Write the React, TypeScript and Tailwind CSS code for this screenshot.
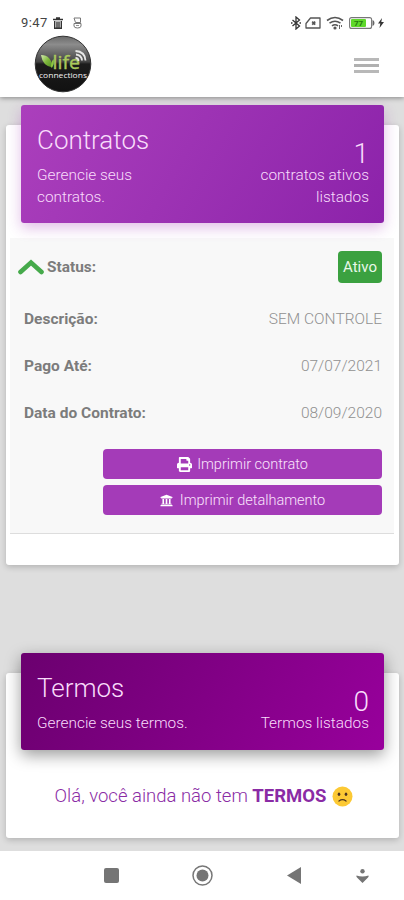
import React from 'react';
import { FaPrint, FaUniversity } from 'react-icons/fa';

interface PanelProps {
  title: string;
  subtitle: string;
  count: number;
  countLabel: string;
  className: string;
  bannerClassName: string;
  children: React.ReactNode;
}

interface FieldProps {
  label: string;
  value: string;
}

const StatusBar: React.FC = () => (
  <div className="flex h-[35px] items-start justify-between pt-[15px] pl-[21px] pr-[20px] text-[#444]">
    <div className="flex items-center">
      <span className="w-[27px] text-[13px] leading-[16px] tracking-[0.4px]">9:47</span>
      <svg className="ml-[5px] h-[12px] w-[10px]" viewBox="0 0 10 12" fill="none" stroke="#333">
        <path d="M0 2.5h10M3 1h4" strokeWidth="1.6" />
        <path d="M1.7 4v7.2h6.6V4M4 4.5v6M6 4.5v6" strokeWidth="1.4" />
      </svg>
      <svg className="ml-[10px] h-[12px] w-[9px]" viewBox="0 0 9 12" fill="none" stroke="#777">
        <path d="M1 1h6.5v4.5h-5zM1 6.500h7V9q0 2-3.500 2T1 9z" strokeWidth="1" />
        <path d="M3 8.5h3" strokeWidth="0.8" />
      </svg>
    </div>
    <div className="flex h-[16px] items-center">
      <svg className="h-[14px] w-[10px]" viewBox="0 0 10 14" fill="none" stroke="#333" strokeWidth="1.3">
        <path d="M1.5 4l7 6L5 13V1l3.500 3-7 6" />
        <path d="M0 7h1.500M8.500 7H10" />
      </svg>
      <svg className="ml-[4px] h-[12px] w-[16px]" viewBox="0 0 16 12" fill="none" stroke="#555" strokeWidth="1.3">
        <path d="M5.5 1H15v10H1V6.500z" strokeLinejoin="round" />
        <path d="M7.2 4.700l3 3M10.200 4.700l-3 3" strokeWidth="1.7" />
      </svg>
      <svg className="ml-[5px] h-[14px] w-[18px]" viewBox="0 0 18 14" fill="none" stroke="#555" strokeWidth="1.6">
        <path d="M1 4.500q8-6 16 0M3.500 7.200q5.500-4 11 0M6 9.800q3-2.200 6 0" />
        <circle cx="9" cy="12" r="0.8" fill="#444" />
        <path d="M13.500 9v4M15.500 9v2" strokeWidth="0.9" />
      </svg>
      <svg className="ml-[5px] h-[12px] w-[26px]" viewBox="0 0 26 12">
        <rect x="0.6" y="0.6" width="22" height="10.8" rx="2" fill="#fff" stroke="#777" strokeWidth="1.1" />
        <path d="M23.500 3q2 0.500 2 3t-2 3" fill="#666" />
        <rect x="2" y="2" width="15" height="8" rx="1" fill="#5fd82a" />
        <text x="5" y="9" fontSize="8" fontWeight="700" fill="#23790f">77</text>
      </svg>
      <svg className="ml-[3px] h-[10px] w-[6px]" viewBox="0 0 6 10" fill="#333">
        <path d="M4 0L0 5.500h2.300L1.500 10 6 4H3.300z" />
      </svg>
    </div>
  </div>
);

const Logo: React.FC = () => (
  <svg className="h-[58px] w-[58px]" viewBox="0 0 58 58">
    <defs>
      <linearGradient id="gloss" x1="0" y1="0" x2="0" y2="1">
        <stop offset="0" stopColor="#6a6a6a" />
        <stop offset="0.15" stopColor="#8c8c8c" />
        <stop offset="0.46" stopColor="#444" />
        <stop offset="0.5" stopColor="#1c1c1c" />
        <stop offset="1" stopColor="#111" />
      </linearGradient>
      <linearGradient id="leaf" x1="0" y1="0" x2="1" y2="1">
        <stop offset="0" stopColor="#d5edb0" />
        <stop offset="0.5" stopColor="#7fb83c" />
        <stop offset="1" stopColor="#4f8a22" />
      </linearGradient>
    </defs>
    <circle cx="29" cy="29" r="27.8" fill="url(#gloss)" stroke="#333" />
    <path d="M7 20q10.500 0 11.500 12.500Q8.500 31 7 20z" fill="url(#leaf)" />
    <path d="M17.500 33q-1.500-5 2-9 1.500 5-2 9z" fill="#8cc63f" />
    <text x="18.500" y="33.500" fontFamily="'Open Sans', sans-serif" fontSize="18" textLength="27.500" lengthAdjust="spacingAndGlyphs" fill="#a9c95c" stroke="#a9c95c" strokeWidth="0.4">life</text>
    <g fill="none" stroke="#e8e8e8" strokeWidth="1.8">
      <path d="M42 19.500q5.500 0.500 6 6M41.500 16q9.500 0.500 10 9.500" />
      <path d="M41.500 23q3 0 3 3" />
    </g>
    <text x="5" y="42.500" fontFamily="'Open Sans', sans-serif" fontSize="8" textLength="48" lengthAdjust="spacingAndGlyphs" fill="#f2f2f2">connections</text>
  </svg>
);

const Header: React.FC = () => (
  <header className="relative h-[97px] bg-white shadow-[0_1px_5px_rgba(0,0,0,0.4)]">
    <StatusBar />
    <div className="flex items-start justify-between pl-[34px] pr-[25px]">
      <Logo />
      <button aria-label="Menu" className="mt-[23px] flex w-[25px] flex-col gap-[3px]">
        <span className="h-[3px] bg-[#b8b8b8]"></span>
        <span className="h-[3px] bg-[#b0b0b0]"></span>
        <span className="h-[3px] bg-[#b8b8b8]"></span>
      </button>
    </div>
  </header>
);

const Panel: React.FC<PanelProps> = ({ title, subtitle, count, countLabel, className, bannerClassName, children }) => (
  <section className={`ml-[6px] mr-[5px] flow-root rounded-[3px] bg-white shadow-[0_2px_6px_rgba(0,0,0,0.2)] ${className}`}>
    <div className={`relative mx-[15px] -mt-[20px] flex justify-between rounded-[3px] pl-[16px] pr-[15px] font-light text-[#f8dcfb] ${bannerClassName}`}>
      <div className="w-[160px] pt-[18px]">
        <h2 className="text-[26px] leading-[34px]">{title}</h2>
        <p className="mt-[7px] text-[15.4px] leading-[22px]">{subtitle}</p>
      </div>
      <div className="w-[125px] pt-[33px] text-right">
        <div className="text-[28px] leading-[31px]">{count}</div>
        <p className="-mt-[5px] text-[15.4px] leading-[22px]">{countLabel}</p>
      </div>
    </div>
    {children}
  </section>
);

const Field: React.FC<FieldProps> = ({ label, value }) => (
  <div className="flex h-[47px] items-center justify-between">
    <span className="text-[15.5px] font-bold text-[#7c7c7c]">{label}</span>
    <span className="text-[15.5px] font-light text-[#909090]">{value}</span>
  </div>
);

const NavBar: React.FC = () => (
  <nav className="relative flex h-[49px] items-center bg-white">
    <svg className="ml-[104px] h-[15px] w-[15px]" viewBox="0 0 15 15">
      <rect width="15" height="15" rx="2" fill="#757575" />
    </svg>
    <svg className="ml-[73px] h-[21px] w-[21px]" viewBox="0 0 21 21">
      <circle cx="10.5" cy="10.5" r="9.5" fill="none" stroke="#777" strokeWidth="1.5" />
      <circle cx="10.5" cy="10.5" r="6" fill="#757575" />
    </svg>
    <svg className="ml-[74px] h-[17px] w-[14px]" viewBox="0 0 14 17" fill="#757575">
      <path d="M14 0v17L0 8.500z" />
    </svg>
    <svg className="ml-[55px] h-[14px] w-[13px]" viewBox="0 0 13 14" fill="#757575">
      <circle cx="6.5" cy="2.2" r="2.2" />
      <path d="M0.500 6.500q6 2 12 0 0.500 1-0.500 2L6.500 14 1 8.500q-1-1-0.500-2z" />
    </svg>
  </nav>
);

const SadFace: React.FC = () => (
  <svg className="ml-[6px] h-[21px] w-[21px]" viewBox="0 0 21 21">
    <circle cx="10.5" cy="10.5" r="10" fill="#fcc934" />
    <ellipse cx="7" cy="8.3" rx="1.3" ry="1.8" fill="#4d3420" />
    <ellipse cx="14" cy="8.3" rx="1.3" ry="1.8" fill="#4d3420" />
    <path d="M7 15q3.500-2.600 7 0" fill="none" stroke="#4d3420" strokeWidth="1.3" strokeLinecap="round" />
  </svg>
);

export default function App() {
  return (
    <div className="flex h-[900px] w-[404px] flex-col overflow-hidden bg-[#dedede] font-['Roboto',sans-serif]">
      <Header />
      <main className="flex-1 pt-[28px]">
        <Panel
          title="Contratos"
          subtitle="Gerencie seus contratos."
          count={1}
          countLabel="contratos ativos listados"
          className="h-[440px]"
          bannerClassName="h-[118px] bg-linear-120 from-[#ab3fbc] to-[#8c22aa] shadow-[0_5px_14px_rgba(156,39,176,0.3)]"
        >
          <div className="ml-[4px] mr-[5px] mt-[15px] h-[296px] border-b border-[#ddd] bg-[#f8f8f8] pl-[14px] pr-[12px]">
            <div className="-ml-[6px] flex h-[58px] items-center">
              <svg className="h-[16px] w-[26px]" viewBox="0 0 26 16">
                <path d="M2.500 13L13 3.500 23.500 13" fill="none" stroke="#46aa4b" strokeWidth="4.6" strokeLinecap="round" />
              </svg>
              <span className="ml-[3px] pt-[2px] text-[15.4px] font-bold text-[#7c7c7c]">Status:</span>
              <span className="ml-auto flex h-[32px] w-[44px] items-center justify-center rounded-[4px] bg-[#3ba140] text-[15px] text-[#e9f8e9]">Ativo</span>
            </div>
            <Field label="Descrição:" value="SEM CONTROLE" />
            <Field label="Pago Até:" value="07/07/2021" />
            <Field label="Data do Contrato:" value="08/09/2020" />
            <div className="ml-auto mt-[12px] flex w-[279px] flex-col gap-[6px] text-[14.5px] font-light text-[#fae3fc]">
              <button className="flex h-[30px] items-center justify-center gap-[5px] rounded-[4px] bg-[#a43bb8]">
                <FaPrint className="h-[15px] w-[15px] text-white" />
                <span className="pt-[1px]">Imprimir contrato</span>
              </button>
              <button className="flex h-[30px] items-center justify-center gap-[7px] rounded-[4px] bg-[#a43bb8]">
                <FaUniversity className="h-[13px] w-[13px] text-white" />
                <span className="pt-[1px]">Imprimir detalhamento</span>
              </button>
            </div>
          </div>
        </Panel>
        <Panel
          title="Termos"
          subtitle="Gerencie seus termos."
          count={0}
          countLabel="Termos listados"
          className="mt-[108px] h-[165px]"
          bannerClassName="h-[97px] bg-linear-120 from-[#6b006f] to-[#98009c] shadow-[0_5px_16px_rgba(0,0,0,0.4)]"
        >
          <p className="mt-[34px] flex items-center justify-center whitespace-nowrap pl-[3px] text-[18.5px] font-light leading-[24px] text-[#8a2ba5]">
            <span>Olá, você ainda não tem <b className="font-bold">TERMOS</b></span>
            <SadFace />
          </p>
        </Panel>
      </main>
      <NavBar />
    </div>
  );
}
